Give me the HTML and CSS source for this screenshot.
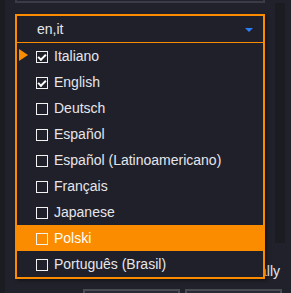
FILE: index.html
```html
<!DOCTYPE html>
<html lang="en">

<head>
  <meta charset="UTF-8">
  <meta name="viewport" content="width=device-width, initial-scale=1.0">
  <title>Language picker</title>

  <link rel="stylesheet" href="styles.css">
</head>

<body>
  <div class="gutter"></div>
  <main class="panel">
    <div class="field"></div>
    <div class="upper">
      <div class="settings"></div>
      <div class="track"></div>
    </div>
    <div class="note">Update automatically</div>
    <div class="buttons">
      <button class="btn"></button>
      <button class="btn"></button>
    </div>

    <div class="dropdown">
      <div class="dropdown-head">
        <span class="value">en,it</span>
        <span class="caret"></span>
      </div>
      <ul class="options">
        <li class="option current"><span class="marker"></span><span class="check on"></span>Italiano</li>
        <li class="option"><span class="marker"></span><span class="check on"></span>English</li>
        <li class="option"><span class="marker"></span><span class="check"></span>Deutsch</li>
        <li class="option"><span class="marker"></span><span class="check"></span>Español</li>
        <li class="option"><span class="marker"></span><span class="check"></span>Español (Latinoamericano)</li>
        <li class="option"><span class="marker"></span><span class="check"></span>Français</li>
        <li class="option"><span class="marker"></span><span class="check"></span>Japanese</li>
        <li class="option hover"><span class="marker"></span><span class="check"></span>Polski</li>
        <li class="option"><span class="marker"></span><span class="check"></span>Português (Brasil)</li>
      </ul>
    </div>
  </main>
</body>

</html>
```

FILE: styles.css
```css
body {
  background: #21212b;
  color: #e6e6ea;
  display: flex;
  font-family: "Liberation Sans", Arial, sans-serif;
  font-size: 14px;
  height: 293px;
  margin: 0;
  overflow: hidden;
}

.gutter {
  background: #1b1b22;
  width: 5px;
}

.panel {
  flex: 1;
  padding-left: 10px;
  position: relative;
}

.field {
  border: 1px solid #3b3b47;
  border-top: none;
  border-width: 0 2px 2px 2px;
  box-sizing: border-box;
  height: 3px;
  width: 250px;
}

.upper {
  display: flex;
}

.settings {
  width: 260px;
}

.track {
  background: #1b1b22;
  height: 240px;
  width: 10px;
}

.note {
  line-height: 16px;
  margin-top: 20px;
  padding-right: 11px;
  text-align: right;
}

.buttons {
  display: flex;
  gap: 5px;
  margin-top: 10px;
  padding-left: 68px;
}

.btn {
  background: #2a2a34;
  border: 2px solid #4b4b56;
  height: 20px;
  padding: 0;
  width: 97px;
}

/* open select popup */
.dropdown {
  background: #20202a;
  border: 2px solid #fb8c00;
  box-shadow: 2px 2px 3px rgba(0, 0, 0, 0.35);
  left: 10px;
  position: absolute;
  top: 14px;
  width: 246px;
}

.dropdown-head {
  align-items: center;
  border-bottom: 1px solid #fb8c00;
  display: flex;
  height: 26px;
  justify-content: space-between;
  padding: 0 10px 0 20px;
}

.caret {
  border-left: 4px solid transparent;
  border-right: 4px solid transparent;
  border-top: 4px solid #2b7ef5;
  height: 0;
  margin-top: 1px;
  width: 0;
}

.options {
  list-style: none;
  margin: 0;
  padding: 0;
}

.option {
  align-items: center;
  display: flex;
  height: 26px;
  padding-left: 2px;
}

.option.hover {
  background: #fb8c00;
  color: #fff;
}

.marker {
  height: 12px;
  margin-right: 8px;
  width: 9px;
}

.current .marker {
  border-bottom: 6px solid transparent;
  border-left: 9px solid #fb8c00;
  border-top: 6px solid transparent;
  box-sizing: border-box;
  height: 12px;
  margin-top: -2px;
  width: 9px;
}

.check {
  border: 1px solid #f2f2f2;
  box-sizing: border-box;
  height: 12px;
  margin-right: 6px;
  margin-top: 2px;
  position: relative;
  width: 12px;
}

.check.on::after {
  border-bottom: 2px solid #fff;
  border-left: 2px solid #fff;
  content: "";
  height: 3px;
  left: 1px;
  position: absolute;
  top: 2px;
  transform: rotate(-45deg);
  width: 6px;
}
```
